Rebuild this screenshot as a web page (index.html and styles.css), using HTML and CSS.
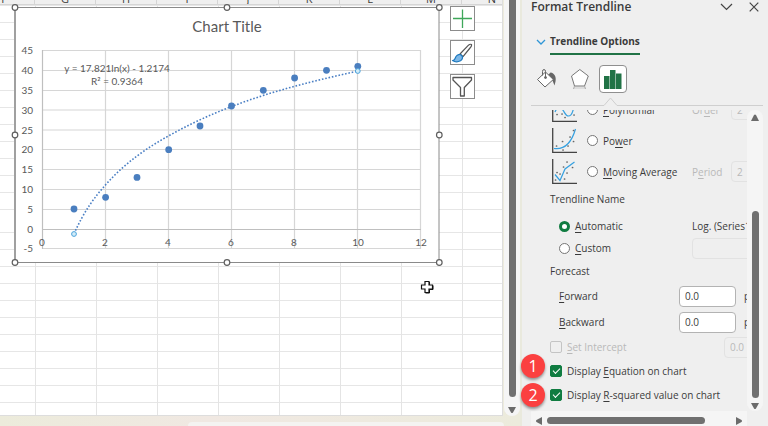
FILE: index.html
```html
<!DOCTYPE html>
<html lang="en">
<head>
    <meta charset="UTF-8">
    <meta name="viewport" content="width=device-width, initial-scale=1.0">
    <title>Format Trendline</title>
    <link rel="stylesheet" href="styles.css">
</head>
<body>
    <div class="app">
        <main class="workbook">
            <div class="sheet">
                <div class="columns">
                    <span>F</span><span>G</span><span>H</span><span>I</span><span>J</span><span>K</span><span>L</span><span>M</span><span>N</span>
                </div>
                <div class="rows rows-top"></div>
                <div class="rows row-tall"></div>
                <div class="rows rows-rest"></div>

                <div class="chart-object">
                    <svg class="chart" width="435" height="265" viewBox="10 3 435 265" role="img" aria-label="Chart Title">
                        <rect class="chart-frame" x="15" y="7.5" width="424" height="255"/>
                        <path class="chart-edge" d="M15 7V263"/>
                        <path class="gridlines" d="M42 50.5H421M42 70.5H421M42 90.5H421M42 110H421M42 130H421M42 149.5H421M42 169.5H421M42 189.5H421M42 209.5H421M42 248.5H421
                            M105.5 50V249M168.5 50V249M231.5 50V249M294.5 50V249M357.5 50V249M420.5 50V249"/>
                        <path class="axis" d="M42.5 50V249M42 229.5H421"/>
                        <text class="chart-title" x="227" y="32">Chart Title</text>
                        <g class="y-labels">
                            <text x="33" y="54">45</text>
                            <text x="33" y="74">40</text>
                            <text x="33" y="94">35</text>
                            <text x="33" y="114">30</text>
                            <text x="33" y="134">25</text>
                            <text x="33" y="153">20</text>
                            <text x="33" y="173">15</text>
                            <text x="33" y="193">10</text>
                            <text x="33" y="213">5</text>
                            <text x="33" y="233">0</text>
                            <text x="33" y="252">-5</text>
                        </g>
                        <g class="x-labels">
                            <text x="42" y="246">0</text>
                            <text x="105" y="246">2</text>
                            <text x="168" y="246">4</text>
                            <text x="231" y="246">6</text>
                            <text x="294" y="246">8</text>
                            <text x="358" y="246">10</text>
                            <text x="421" y="246">12</text>
                        </g>
                        <path class="trendline" d="M74 233.8C84.5 210.2 95.1 196.6 105.6 184.8C126.6 161.2 147.7 147.6 168.7 135.8C231.8 100.5 294.9 85.1 358 71"/>
                        <g class="points">
                            <circle cx="74" cy="209" r="3.4"/>
                            <circle cx="105.6" cy="197.3" r="3.4"/>
                            <circle cx="137" cy="177.4" r="3.4"/>
                            <circle cx="168.7" cy="149.7" r="3.4"/>
                            <circle cx="200" cy="126" r="3.4"/>
                            <circle cx="231.5" cy="106" r="3.4"/>
                            <circle cx="263.3" cy="90.3" r="3.4"/>
                            <circle cx="294.6" cy="78" r="3.4"/>
                            <circle cx="326.5" cy="70.3" r="3.4"/>
                            <circle cx="357.8" cy="66.3" r="3.4"/>
                        </g>
                        <g class="trend-ends">
                            <circle cx="74" cy="234" r="2.4"/>
                            <circle cx="357.8" cy="71" r="2.4"/>
                        </g>
                        <g class="equation">
                            <text x="117" y="72">y = 17.821ln(x) - 1.2174</text>
                            <text x="117" y="85">R² = 0.9364</text>
                        </g>
                        <g class="handles">
                            <circle cx="15" cy="7.5" r="2.8"/>
                            <circle cx="227" cy="7.5" r="2.8"/>
                            <circle cx="439.3" cy="7.5" r="2.8"/>
                            <circle cx="15" cy="135" r="2.8"/>
                            <circle cx="439.3" cy="135" r="2.8"/>
                            <circle cx="15" cy="262.5" r="2.8"/>
                            <circle cx="227" cy="262.5" r="2.8"/>
                            <circle cx="439.3" cy="262.5" r="2.8"/>
                        </g>
                    </svg>
                    <div class="chart-buttons">
                        <button type="button" aria-label="Chart Elements">
                            <svg width="23" height="23" viewBox="0 0 23 23"><path d="M11.5 2.5V21M2 11.5H21" stroke="#3fa75a" stroke-width="1.3"/></svg>
                        </button>
                        <button type="button" aria-label="Chart Styles">
                            <svg width="23" height="23" viewBox="0 0 23 23" fill="none" stroke-linejoin="round">
                                <path d="M9 13L17.5 4.2C18.8 3 20.8 3 20.6 4C20.6 5 20 6 19 7L12 15.7Z" fill="#fff" stroke="#555" stroke-width="1.2"/>
                                <path d="M1.5 19.5C4 19.5 3.8 17.5 5 15.5C6.5 13.3 9 13 10.5 14.3C12.3 16 11.6 18.6 9.5 19.8C7 21 3.5 20.8 1.5 19.5Z" fill="#7db8e8" stroke="#1c78bd" stroke-width="1.2"/>
                            </svg>
                        </button>
                        <button type="button" aria-label="Chart Filters">
                            <svg width="23" height="23" viewBox="0 0 23 23" fill="#fff" stroke="#555" stroke-width="1.3" stroke-linejoin="round">
                                <path d="M2 2.5H20.5V5L13.3 12.5V21H9.5V12.5L2 5Z"/>
                            </svg>
                        </button>
                    </div>
                </div>

                <svg class="cursor" width="14" height="14" viewBox="0 0 14 14">
                    <path d="M5 1.5H9V5H12.5V9H9V12.5H5V9H1.5V5H5Z" fill="#fff" stroke="#111" stroke-width="1.2"/>
                    <path d="M9.5 2V5M13 5.5V9.5H9.5V13H5.5" fill="none" stroke="#111" stroke-width="1"/>
                </svg>
            </div>

            <div class="scroll-v sheet-scroll">
                <div class="thumb"></div>
                <svg width="8" height="6" viewBox="0 0 8 6"><path d="M0 0H8L5 5.5Q4 6.5 3 5.5Z"/></svg>
            </div>
            <div class="sheet-tabs"><div class="tab-scroll"></div></div>
        </main>

        <aside class="panel">
            <header class="panel-header">
                <h1>Format Trendline</h1>
                <button type="button" aria-label="Task Pane Options">
                    <svg width="13" height="10" viewBox="0 0 13 10"><path d="M1 2L6.5 7.5L12 2"/></svg>
                </button>
                <button type="button" aria-label="Close">
                    <svg width="10" height="10" viewBox="0 0 10 10"><path d="M.7 .7L9.3 9.3M9.3 .7L.7 9.3"/></svg>
                </button>
            </header>

            <div class="section-title">
                <svg width="10" height="6" viewBox="0 0 10 6"><path d="M1 1L5 5L9 1" fill="none" stroke="#2f96d6" stroke-width="1.3"/></svg>
                <h2>Trendline Options</h2>
            </div>

            <nav class="tabs">
                <button type="button" aria-label="Fill &amp; Line">
                    <svg width="22" height="22" viewBox="0 0 22 22" fill="#fff" stroke="#666" stroke-width="1">
                        <path d="M14.5 4.5C18.5 5 20.5 9 19.5 13.5L18.5 17.5L16.5 12.5L12 7Z" fill="#666" stroke="none"/>
                        <path d="M9.5 4L17.3 11.5L9 19L1.5 11.5Z"/>
                        <path d="M6.5 7.5V3.5Q6.5 1.5 8 1.5T9.5 3.5V9" fill="none"/>
                        <circle cx="9.5" cy="9.5" r="1" fill="#666"/>
                    </svg>
                </button>
                <button type="button" aria-label="Effects">
                    <svg width="22" height="22" viewBox="0 0 22 22">
                        <path d="M5 19H16.5V21H5Z" fill="#ddd"/>
                        <path d="M10.8 1.5L19.3 8L15.5 18H5.5L2.5 8Z" fill="#fff" stroke="#777" stroke-width="1"/>
                        <path d="M5.5 18L4.5 21M15.5 18L16.5 21" stroke="#aaa"/>
                    </svg>
                </button>
                <button type="button" class="active" aria-label="Trendline Options">
                    <svg width="18" height="19" viewBox="0 0 18 19" fill="#217346">
                        <rect x="0" y="6" width="5.5" height="13"/><rect x="6" y="0" width="5.5" height="19"/><rect x="12" y="3.5" width="5.5" height="15.5"/>
                    </svg>
                </button>
            </nav>
            <svg class="notch" height="12" width="232" viewBox="0 0 232 12"><path d="M0 9.5H73L79.5 2L86 9.5H232"/></svg>

            <div class="scroller">
                <form class="options">
                    <div class="type-row">
                        <svg class="thumbnail" width="25" height="25" viewBox="0 0 25 25">
                            <path class="frame" d="M.7 0V24.3H25"/>
                            <path class="line" d="M3 15Q6 8 10 12C13 15 13 19 16.5 19S20 16 21.500 12"/>
                            <path class="dots" d="M5 17.500h.1M10 17h.1M13 20.500h.1M22 18h.1"/>
                        </svg>
                        <input type="radio" name="type" id="polynomial">
                        <label for="polynomial"><u>P</u>olynomial</label>
                        <label class="dim" for="order">Or<u>d</u>er</label>
                        <input class="box" type="text" id="order" value="2" disabled>
                    </div>
                    <div class="type-row">
                        <svg class="thumbnail" width="25" height="25" viewBox="0 0 25 25">
                            <path class="frame" d="M.7 0V24.3H25"/>
                            <path class="line" d="M2 20.5C13 22 20 13 23.5 1"/>
                            <path class="dots" d="M4.500 18h.1M10.500 13.500h.1M11 22h.1M16 18h.1M18 9h.1M21.500 2.500h.1M21.500 13.500h.1"/>
                        </svg>
                        <input type="radio" name="type" id="power">
                        <label for="power">Po<u>w</u>er</label>
                    </div>
                    <div class="type-row">
                        <svg class="thumbnail" width="25" height="25" viewBox="0 0 25 25">
                            <path class="frame" d="M.7 0V24.3H25"/>
                            <path class="line" d="M3 15.5L8 21.5L13 10L22.5 3"/>
                            <path class="dots" d="M3.500 21h.1M5 13.500h.1M8 15h.1M11.500 8h.1M12.500 20h.1M15 3h.1M15 14h.1M20.500 8.500h.1"/>
                        </svg>
                        <input type="radio" name="type" id="average">
                        <label for="average"><u>M</u>oving Average</label>
                        <label class="dim" for="period">P<u>e</u>riod</label>
                        <input class="box" type="text" id="period" value="2" disabled>
                    </div>

                    <h3>Trendline Name</h3>
                    <div class="name-rows">
                        <div class="name-row">
                            <input type="radio" name="name" id="automatic" checked>
                            <label for="automatic"><u>A</u>utomatic</label>
                            <span>Log. (Series1)</span>
                        </div>
                        <div class="name-row">
                            <input type="radio" name="name" id="custom">
                            <label for="custom"><u>C</u>ustom</label>
                            <input class="box" type="text" aria-label="Custom name" disabled>
                        </div>
                    </div>

                    <h3>Forecast</h3>
                    <div class="forecast-row">
                        <label for="forward"><u>F</u>orward</label>
                        <input class="box" type="text" id="forward" value="0.0">
                        <span>periods</span>
                    </div>
                    <div class="forecast-row">
                        <label for="backward"><u>B</u>ackward</label>
                        <input class="box" type="text" id="backward" value="0.0">
                        <span>periods</span>
                    </div>

                    <div class="check-row">
                        <input type="checkbox" id="intercept" disabled>
                        <label class="dim" for="intercept"><u>S</u>et Intercept</label>
                        <input class="box" type="text" aria-label="Intercept" value="0.0" disabled>
                    </div>
                    <div class="check-row">
                        <input type="checkbox" id="equation" checked>
                        <label for="equation">Display <u>E</u>quation on chart</label>
                    </div>
                    <div class="check-row">
                        <input type="checkbox" id="rsquared" checked>
                        <label for="rsquared">Display <u>R</u>-squared value on chart</label>
                    </div>
                </form>
                <div class="scroll-v panel-scroll">
                    <svg width="8" height="7" viewBox="0 0 8 7"><path d="M0 7H8L5 1Q4 0 3 1Z"/></svg>
                    <div class="thumb"></div>
                    <svg width="8" height="6" viewBox="0 0 8 6"><path d="M0 0H8L5 5.5Q4 6.5 3 5.5Z"/></svg>
                </div>
            </div>
            <div class="scroll-h">
                <svg width="6" height="8" viewBox="0 0 6 8"><path d="M6 0V8L.5 5Q-.5 4 .5 3Z"/></svg>
                <div class="thumb"></div>
                <svg width="6" height="8" viewBox="0 0 6 8"><path d="M0 0V8L5.5 5Q6.5 4 5.5 3Z"/></svg>
            </div>

            <span class="badge badge-one">1</span>
            <span class="badge badge-two">2</span>
        </aside>
    </div>
</body>
</html>
```
FILE: styles.css
```css
* { box-sizing: border-box; margin: 0; padding: 0; }
body { font-family: "Open Sans", "Noto Sans", sans-serif; font-size: 11px; color: #3b3b3b; background: #e9e9dd; overflow: hidden; }
button { background: none; border: none; cursor: pointer; display: flex; align-items: center; justify-content: center; }
svg { display: block; flex: none; }
u { text-underline-offset: 2px; }

.app { display: grid; grid-template-columns: 1fr 246px; gap: 2px; height: 100vh; }

/* worksheet */
.workbook { display: grid; grid-template-columns: 1fr 16px; grid-template-rows: 1fr 10px; column-gap: 1px; background: linear-gradient(90deg, #ecebdb, #f0e8e2 40%, #ecebdc); min-width: 0; }
.sheet { position: relative; display: flex; flex-direction: column; background: #fff; border-right: 1px solid #ddd; border-bottom: 1px solid #ddd; overflow: hidden; }
.columns { display: flex; align-items: flex-end; height: 5px; margin-left: -26px; background: #efefef; border-bottom: 1px solid #d5d5d5; overflow: hidden; flex: none; }
.columns span { flex: none; width: 61px; line-height: 7px; padding-bottom: 2px; text-align: center; border-right: 1px solid #d5d5d5; }
.rows { background-image: linear-gradient(90deg, #e4e4e4 1px, transparent 1px), linear-gradient(0deg, #e6e6e6 1px, transparent 1px); background-size: 61px 17px; background-position: 35px 0; flex: none; }
.rows-top { height: 206px; background-position: 35px 1px; }
.row-tall { height: 22px; background-size: 61px 22px; }
.rows-rest { flex: 1; }

.chart-object { position: absolute; left: 10px; top: 3px; display: flex; gap: 5px; }
.chart { font-family: Lato, "Open Sans", sans-serif; }
.chart text { fill: #595959; }
.chart-frame { fill: #fff; stroke: #8a8a8a; stroke-width: 1; }
.chart-edge { stroke: #a0a0a0; stroke-width: 2; }
.gridlines { stroke: #d6d6d6; stroke-width: 1.2; fill: none; }
.axis { stroke: #bfbfbf; stroke-width: 1.2; fill: none; }
.chart-title { font-size: 15px; text-anchor: middle; }
.y-labels { font-size: 10px; text-anchor: end; }
.x-labels, .equation { font-size: 10px; text-anchor: middle; }
.trendline { fill: none; stroke: #4a7fc4; stroke-width: 1.6; stroke-dasharray: 1.6 1.8; }
.points { fill: #4a7ebf; }
.trend-ends { fill: #d3ecf8; stroke: #4ba3dc; stroke-width: 1; }
.handles { fill: #fff; stroke: #5f5f5f; stroke-width: 1.2; }

.chart-buttons { display: flex; flex-direction: column; gap: 9px; padding-top: 3px; }
.chart-buttons button { width: 25px; height: 25px; background: #fff; border: 1px solid #8c8c8c; }
.cursor { position: absolute; left: 420px; top: 280px; }

.sheet-tabs { grid-column: 1 / -1; padding: 6px 16px 0 188px; }
.tab-scroll { height: 100%; background: #f4f3f1; border-radius: 6px 6px 0 0; }

/* scrollbars */
.scroll-v, .scroll-h { display: flex; align-items: center; background: #f5f5f5; fill: #6b6b6b; }
.scroll-v { flex-direction: column; }
.thumb { background: #707070; border-radius: 4px; }
.scroll-v .thumb { width: 7px; }
.sheet-scroll { gap: 10px; padding-bottom: 3px; border-radius: 0 0 8px 8px; }
.sheet-scroll .thumb { flex: 1; border-radius: 0 0 4px 4px; }

/* format pane */
.panel { position: relative; display: flex; flex-direction: column; background: #efefef; min-width: 0; }
.panel-header { display: flex; align-items: center; gap: 16px; height: 14px; padding: 0 9px; }
.panel-header h1 { flex: 1; font-size: 12px; font-weight: 600; line-height: 14px; }
.panel-header svg { fill: none; stroke: #444; stroke-width: 1.2; }
.section-title { display: flex; align-items: center; gap: 4px; padding: 14px 14px 0; height: 41px; }
.section-title h2 { font-size: 10px; font-weight: 700; line-height: 24px; border-bottom: 2px solid #217346; }
.tabs { display: flex; align-items: center; gap: 5px; height: 48px; padding: 0 11px; }
.tabs button { width: 28px; height: 28px; border-radius: 4px; }
.tabs .active { background: #fff; border: 1px solid #8f8f8f; }
.notch { margin: -7px 0 0 9px; fill: #efefef; stroke: #cfcfcf; }

.scroller { flex: 1; display: flex; min-height: 0; margin-top: 2px; }
.options { flex: 1; min-width: 0; overflow: hidden; }
.options h3 { font-size: 10px; font-weight: 400; line-height: 24px; padding-left: 28px; }
.options label, .options span { font-size: 10px; white-space: nowrap; }
.options .dim { color: #b9b9b9; }

.type-row, .name-row, .forecast-row, .check-row { display: grid; align-items: center; }
.type-row { grid-template-columns: 35px 16px 89px 39px 57px; height: 31px; padding-left: 30px; }
.type-row:first-child { margin-top: -16px; }
.name-rows { padding-top: 4px; }
.name-row { grid-template-columns: 16px 117px 100px; height: 22px; padding-left: 37px; }
.forecast-row { grid-template-columns: 120px 65px auto; height: 26px; padding-left: 37px; }
.check-row { grid-template-columns: 17px 157px 57px; height: 24px; padding-left: 28px; }

.thumbnail { fill: none; }
.thumbnail .frame { stroke: #444; stroke-width: 1.3; }
.thumbnail .line { stroke: #35a0e0; stroke-width: 1.2; }
.thumbnail .dots { stroke: #666; stroke-width: 1.7; stroke-linecap: round; }

input[type="radio"] { appearance: none; width: 11px; height: 11px; border: 1px solid #767676; border-radius: 50%; background: #fff; }
input[type="radio"]:checked { border: 3px solid #107c41; }
input[type="checkbox"] { appearance: none; width: 12px; height: 12px; border: 1px solid #767676; border-radius: 2px; display: grid; place-items: center; }
input[type="checkbox"]:disabled { border-color: #c4c4c4; }
input[type="checkbox"]:checked { background: #107c41; border-color: #107c41; }
input[type="checkbox"]:checked::before { content: ""; width: 6px; height: 3px; margin-bottom: 2px; border: solid #fff; border-width: 0 0 1px 1px; transform: rotate(-45deg); }
.box { width: 57px; height: 21px; padding: 0 5px; font: inherit; font-size: 10px; color: #3b3b3b; background: #fff; border: 1px solid #b3b3b3; border-radius: 4px; }
.box:disabled { color: #b9b9b9; background: transparent; border-color: #e2e2e2; }
.name-row .box { width: 100px; }

.panel-scroll { width: 16px; margin-right: 5px; gap: 5px; padding: 4px 0 2px; border-radius: 8px; }
.panel-scroll .thumb { height: 187px; margin-top: auto; }
.scroll-h { height: 15px; margin: 0 21px 0 9px; padding: 6px 5px 2px; gap: 5px; }
.scroll-h .thumb { width: 158px; height: 7px; margin-right: auto; }

/* numbered callouts */
.badge { position: absolute; left: -1px; width: 24px; height: 24px; border-radius: 50%; background: #fb4040; color: #fff; font-size: 16px; line-height: 24px; text-align: center; box-shadow: 0 2px 3px rgba(0,0,0,0.4); }
.badge-one { top: 354px; }
.badge-two { top: 383px; }
```
